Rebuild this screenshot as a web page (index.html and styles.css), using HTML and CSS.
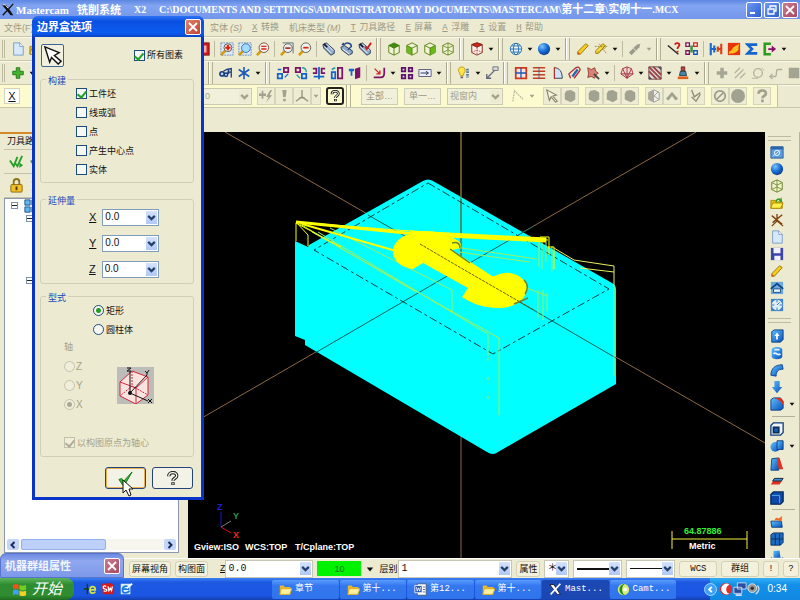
FILE: index.html
```html
<!DOCTYPE html>
<html lang="zh-CN">
<head>
<meta charset="utf-8">
<title>Mastercam 铣削系统 X2</title>
<link rel="stylesheet" href="styles.css">
</head>
<body>
<svg class="defs" aria-hidden="true">
<defs>
<linearGradient id="gBlue" x1="0" y1="0" x2="1" y2="1"><stop offset="0" stop-color="#5cc0ff"/><stop offset="1" stop-color="#0a4fb8"/></linearGradient>
<radialGradient id="gBall" cx=".35" cy=".3" r=".8"><stop offset="0" stop-color="#7cc4ff"/><stop offset=".5" stop-color="#1c6fd8"/><stop offset="1" stop-color="#06357c"/></radialGradient>
</defs>
<symbol id="chev" viewBox="0 0 10 10"><path d="M2 3.500 5 6.500 8 3.500" fill="none" stroke="currentColor" stroke-width="2"/></symbol>
<symbol id="tri" viewBox="0 0 10 10"><path d="M1 3h8L5 8z" fill="currentColor"/></symbol>
<symbol id="cross" viewBox="0 0 10 10"><path d="M1 1l8 8M9 1l-8 8" stroke="currentColor" stroke-width="1.800"/></symbol>
<symbol id="logo" viewBox="0 0 16 16"><path d="M1 2h5l8 12h-3z" fill="#111"/><path d="M14 1 2 14" stroke="#111" stroke-width="1.500"/><path d="M2 2h3l3 4" fill="none" stroke="#fff"/></symbol>
<symbol id="page" viewBox="0 0 16 16"><path d="M3 1h7l4 4v10H3z" fill="#d5e9fb" stroke="#7697c4"/><path d="M10 1v4h4" fill="#fff" stroke="#7697c4"/></symbol>
<symbol id="open" viewBox="0 0 16 16"><path d="M1 5h5l1 2h7v7H1z" fill="#e8c400" stroke="#a88600"/><path d="M3 8h12l-3 6H1z" fill="#fff04c" stroke="#a88600"/><path d="M6 6c1-4 5-4 6-3l1-2 1 6-5-1 2-1c-2-1-3 0-3 2z" fill="#3a9c28"/></symbol>
<symbol id="redx" viewBox="0 0 16 16"><rect x="1" y="1" width="14" height="14" fill="#d21a1a" stroke="#701010"/><path d="M4 4h8v8H4z" fill="#f6b0a8"/></symbol>
<symbol id="lensbase" viewBox="0 0 16 16"><path d="M1 15l5-5" stroke="#d79a10" stroke-width="3"/></symbol>
<symbol id="zoomwin" viewBox="0 0 16 16"><path d="M1 1h14v14H1z" fill="#dce8f4" stroke="#5c88c4" stroke-dasharray="2 1"/><use href="#lensbase"/><circle cx="9" cy="6.500" r="4.500" fill="#f5f2ee" stroke="#57473a"/><path d="M9 3.500v6M6 6.500h6" stroke="#e02010" stroke-width="2.400"/></symbol>
<symbol id="zoomtgt" viewBox="0 0 16 16"><path d="M1 1h14v14H1z" fill="#dce8f4" stroke="#5c88c4" stroke-dasharray="2 1"/><use href="#lensbase"/><circle cx="9" cy="7" r="5" fill="#9fdcff" stroke="#3568a8"/></symbol>
<symbol id="zoomin" viewBox="0 0 16 16"><use href="#lensbase"/><circle cx="9" cy="6.500" r="5.500" fill="#f5f2ee" stroke="#6b4a3a"/><path d="M6 5h6M6 8h6" stroke="#e02010" stroke-width="1.600"/></symbol>
<symbol id="zoomsel" viewBox="0 0 16 16"><path d="M3 1h12v12" fill="none" stroke="#55687e"/><use href="#lensbase"/><circle cx="9" cy="7" r="5" fill="#eee" stroke="#555"/><path d="M6 7h6" stroke="#a33" stroke-width="2"/></symbol>
<symbol id="zoomout" viewBox="0 0 16 16"><use href="#lensbase"/><circle cx="9" cy="6.500" r="5.500" fill="#f2f2ee" stroke="#555"/><path d="M6 6.500h6" stroke="#e02010" stroke-width="2"/></symbol>
<symbol id="pan" viewBox="0 0 16 16"><path d="M1 3l4-2 9 8v4l-4 2-8-8z" fill="#8fa9c8" stroke="#22344c"/><path d="M3 5l8 8M6 3l7 7" stroke="#fff"/><path d="M2 2l4 4" stroke="#113" stroke-width="2"/></symbol>
<symbol id="pan2" viewBox="0 0 16 16"><path d="M1 6l4-2 9 6v3l-4 2-8-6z" fill="#8fa9c8" stroke="#22344c"/><path d="M3 8l8 6" stroke="#fff"/><path d="M5 3c2-3 8-2 8 2l-4 4M5 3 3 1M5 3H2" fill="none" stroke="#1c3f90" stroke-width="1.600"/></symbol>
<symbol id="pan3" viewBox="0 0 16 16"><use href="#pan"/><path d="M8 5l2 3 5-7" fill="none" stroke="#d01818" stroke-width="2"/></symbol>
<symbol id="cubeT" viewBox="0 0 16 16"><path d="M8 1l6 3v8l-6 3-6-3V4z" fill="#f1f2d4" stroke="#4b7a08"/><path d="M8 1l6 3-6 3-6-3z" fill="#3c8c10"/><path d="M2 4l6 3 6-3M8 7v8" fill="none" stroke="#4b7a08"/></symbol>
<symbol id="cubeL" viewBox="0 0 16 16"><path d="M8 1l6 3v8l-6 3-6-3V4z" fill="#f1f2d4" stroke="#4b7a08"/><path d="M2 4l6 3v8l-6-3z" fill="#6ab81c"/><path d="M2 4l6 3 6-3M8 7v8" fill="none" stroke="#4b7a08"/></symbol>
<symbol id="cubeR" viewBox="0 0 16 16"><path d="M8 1l6 3v8l-6 3-6-3V4z" fill="#f1f2d4" stroke="#4b7a08"/><path d="M14 4 8 7v8l6-3z" fill="#6ab81c"/><path d="M2 4l6 3 6-3M8 7v8" fill="none" stroke="#4b7a08"/></symbol>
<symbol id="cubeI" viewBox="0 0 16 16"><path d="M8 1l6 3v8l-6 3-6-3V4z" fill="#f1f2d4" stroke="#5c7a18"/><path d="M2 4l6 3 6-3M8 7v8M2 12l6-3 6 3M8 1v6" fill="none" stroke="#6d8c28"/></symbol>
<symbol id="cubeRed" viewBox="0 0 16 16"><path d="M2 3l6-2 6 2v9l-6 3-6-3z" fill="#fbf0ea" stroke="#7a1c10"/><path d="M2 3l6-2 6 2-6 3z" fill="#d8241c" stroke="#7a1c10"/><path d="M8 6v9M2 12l6-3 6 3" fill="none" stroke="#b44" stroke-dasharray="2 1"/></symbol>
<symbol id="globe" viewBox="0 0 16 16"><circle cx="8" cy="8" r="6.500" fill="#e8f4fa" stroke="#1f6aa8"/><ellipse cx="8" cy="8" rx="3" ry="6.500" fill="none" stroke="#1f6aa8"/><path d="M1.500 8h13M3 4.500h10M3 11.500h10" stroke="#1f6aa8"/></symbol>
<symbol id="ball" viewBox="0 0 16 16"><circle cx="8" cy="8" r="7" fill="url(#gBall)"/></symbol>
<symbol id="eraser" viewBox="0 0 16 16"><path d="M2 11 11 2l3 2-9 10H2z" fill="#f6ce1c" stroke="#94700a"/><path d="M2 11l3 3H2z" fill="#e0502c"/></symbol>
<symbol id="erase2" viewBox="0 0 16 16"><path d="M2 10 10 2l3 2-8 9H2z" fill="#f6dc3c" stroke="#94700a"/><path d="M1 5h14M4 12l10-6M6 2l8 11" stroke="#9a8420" stroke-dasharray="2 1"/></symbol>
<symbol id="erase3" viewBox="0 0 16 16"><path d="M1 12 10 3l4-1-1 4-9 9z" fill="#9c9c8a"/><path d="M4 5l6 6" stroke="#dcdcc8"/></symbol>
<symbol id="query" viewBox="0 0 16 16"><path d="M1 4l12 10" stroke="#222" stroke-width="1.500"/><path d="M9 3c1-3 6-2 5 1-.5 1.500-2 1.500-2 4M12 10v2" fill="none" stroke="#d01818" stroke-width="2"/></symbol>
<symbol id="levels" viewBox="0 0 16 16"><path d="M1 1h4v4H1zM1 10h4v4H1z" fill="#fff" stroke="#801060" stroke-width="1.500"/><path d="M10 1h4v4h-4z" fill="#fff" stroke="#d02020" stroke-width="1.500"/><path d="M10 10h4v4h-4z" fill="#fff" stroke="#1050c0" stroke-width="1.500"/><path d="M6 4h3v8H6z" fill="#3a9848"/></symbol>
<symbol id="hsplit" viewBox="0 0 16 16"><path d="M2 1v14M2 8h6M6 4v8" stroke="#1868d0" stroke-width="2.400"/><path d="M14 2v12M9 8h5M10 5v6" stroke="#e03c14" stroke-width="2.400"/></symbol>
<symbol id="fire" viewBox="0 0 16 16"><path d="M1 1h14v14H1z" fill="#e6340c"/><path d="M2 14c0-5 3-3 4-6s6-4 8-6c-2 5 1 6-3 9s-6 1-9 3z" fill="#ffc020"/></symbol>
<symbol id="sigma" viewBox="0 0 16 16"><path d="M14 3H3l5 5-5 5h11" fill="none" stroke="#1464d0" stroke-width="3"/></symbol>
<symbol id="exitg" viewBox="0 0 16 16"><path d="M9 2H2v12h7" fill="none" stroke="#2c9c20" stroke-width="3"/><path d="M6 7h4V4l5 4-5 4V9H6z" fill="#8a1070"/></symbol>
<symbol id="plus" viewBox="0 0 16 16"><path d="M6 2h4v4h4v4h-4v4H6v-4H2V6h4z" fill="#44b42c" stroke="#1c7410"/></symbol>
<symbol id="glasses" viewBox="0 0 16 16"><circle cx="3.500" cy="9" r="2.500" fill="#b8d0ec" stroke="#123a80" stroke-width="1.800"/><circle cx="8" cy="10" r="2" fill="#b8d0ec" stroke="#123a80" stroke-width="1.500"/><path d="M5 6l4-2 5-1v10M9 7h5M11 4v5" fill="none" stroke="#1c3f80" stroke-width="1.500"/></symbol>
<symbol id="star" viewBox="0 0 16 16"><path d="M8 1v14M2 4l12 8M14 4 2 12" stroke="#1858b8" stroke-width="1.800"/></symbol>
<symbol id="xf1" viewBox="0 0 16 16"><path d="M9 2h5v5H9z" fill="none" stroke="#7a1468" stroke-width="2"/><path d="M2 9h5v5H2z" fill="none" stroke="#1464d0" stroke-width="2"/><path d="M10 13l4-4M2 4h4" stroke="#1464d0" stroke-width="1.500"/></symbol>
<symbol id="xf2" viewBox="0 0 16 16"><path d="M2 2h5v5H2z" fill="none" stroke="#7a1468" stroke-width="2"/><path d="M9 9h5v5H9z" fill="none" stroke="#1464d0" stroke-width="2"/><path d="M9 2c4 0 5 2 5 5M3 10l4 4" fill="none" stroke="#24a0a0" stroke-width="1.500"/></symbol>
<symbol id="xf3" viewBox="0 0 16 16"><path d="M1 3h4v5H1M15 3h-4v5h4" fill="none" stroke="#7a1468" stroke-width="2"/><path d="M8 1v14M2 12h12" stroke="#1464d0" stroke-width="2"/></symbol>
<symbol id="xf4" viewBox="0 0 16 16"><path d="M9 2h5v12H9z" fill="none" stroke="#7a1468" stroke-width="2"/><path d="M2 7h4v7H2z" fill="none" stroke="#1464d0" stroke-width="2"/><path d="M2 4l4-2" stroke="#24a0a0" stroke-width="2"/></symbol>
<symbol id="xf5" viewBox="0 0 16 16"><path d="M8 3l6-2v12l-6 2z" fill="#7a1468"/><path d="M1 3h6v3H5v5H3V6H1z" fill="#1464d0"/></symbol>
<symbol id="bend" viewBox="0 0 16 16"><path d="M2 13h8c3 0 4-2 4-5V2" fill="none" stroke="#7a1468" stroke-width="2"/><path d="M3 3l6 6M9 5v4H5" fill="none" stroke="#d02020" stroke-width="1.500"/></symbol>
<symbol id="four" viewBox="0 0 16 16"><path d="M2 2h4v4H2zM10 2h4v4h-4zM2 10h4v4H2zM10 10h4v4h-4z" fill="#dce" stroke="#5c1468" stroke-width="2"/></symbol>
<symbol id="flow" viewBox="0 0 16 16"><path d="M1 4h14v8H1z" fill="#eef" stroke="#557"/><path d="M3 8h8M9 6l3 2-3 2" fill="none" stroke="#124"/></symbol>
<symbol id="bulb" viewBox="0 0 16 16"><path d="M5 1a4 4 0 0 1 3 7l-1 3H4L3 8a4 4 0 0 1 2-7z" fill="#ffe448" stroke="#b89818"/><path d="M4 13h3" stroke="#666" stroke-width="2"/><path d="M12 3v10" stroke="#5878a0" stroke-width="3" stroke-dasharray="2 1"/></symbol>
<symbol id="dim" viewBox="0 0 16 16"><path d="M2 14 13 3M2 9v5h5" fill="none" stroke="#60687c" stroke-width="1.500"/><path d="M9 1h6v4H9z" fill="#ddd" stroke="#60687c"/></symbol>
<symbol id="grid4" viewBox="0 0 16 16"><path d="M2 2h12v12H2z" fill="#f6e8e0" stroke="#d83418" stroke-width="2"/><path d="M8 2v12M2 8h12" stroke="#1858b8" stroke-width="1.500"/></symbol>
<symbol id="lines" viewBox="0 0 16 16"><path d="M1 2h14M1 6h14M1 10h14M1 14h14" stroke="#c83c20" stroke-width="1.500"/><path d="M8 1v14" stroke="#4c5c88"/></symbol>
<symbol id="quad" viewBox="0 0 16 16"><path d="M5 14V2c6 0 9 5 9 12z" fill="#cfe4f8" stroke="#234"/><path d="M5 1v14" stroke="#d02020"/></symbol>
<symbol id="clip" viewBox="0 0 16 16"><path d="M3 14 1 9l8-7c3-2 6 1 4 4l-6 8" fill="none" stroke="#b02c2c" stroke-width="1.500"/><path d="M5 12l6-8" stroke="#2c60b0" stroke-width="2.500"/></symbol>
<symbol id="gear" viewBox="0 0 16 16"><path d="M2 2l4 2 4-2 1 4 3 2-3 3-1 3-4-2-4 1 1-4z" fill="#d88478" stroke="#8c3c30"/><path d="M9 9l6 6" stroke="#444" stroke-width="2"/></symbol>
<symbol id="mesh" viewBox="0 0 16 16"><path d="M3 3l5-2 5 2 2 6-7 5-7-5z" fill="#f0d8d0" stroke="#a02c38"/><path d="M3 3l5 11 5-11M1 9h14M8 1v13" fill="none" stroke="#a02c38"/></symbol>
<symbol id="hatch" viewBox="0 0 16 16"><path d="M1 1h14v14H1z" fill="#ddd" stroke="#5c3838"/><path d="M1 1l14 14M6 1l9 9M1 6l9 9" stroke="#9c4444" stroke-width="2.200"/><path d="M11 1h4v4zM1 11v4h4z" fill="#555"/></symbol>
<symbol id="tool" viewBox="0 0 16 16"><path d="M6 1h4v5H6z" fill="#b44" stroke="#622"/><path d="M5 6h6l1 5H4z" fill="#48a" stroke="#234"/><path d="M2 12h12v3H2z" fill="#e06018"/></symbol>
<symbol id="gplus" viewBox="0 0 16 16"><path d="M6 2h4v4h4v4h-4v4H6v-4H2V6h4z" fill="#a6a694"/></symbol>
<symbol id="gbolt" viewBox="0 0 16 16"><path d="M0 5h3V2h2v3h3v3H5v3H3V8H0z" fill="#a2a28e"/><path d="M13 1 8 9h3l-3 6 7-8h-3l3-6z" fill="#a2a28e"/></symbol>
<symbol id="gexc" viewBox="0 0 16 16"><path d="M6 1h5l-1 8H7zM7 11h3v3H7z" fill="#a2a28e"/></symbol>
<symbol id="gaxis" viewBox="0 0 16 16"><path d="M8 1v8L1 14M8 9l7 5M5 10h6" fill="none" stroke="#92927e" stroke-width="1.500"/></symbol>
<symbol id="glines" viewBox="0 0 16 16"><path d="M2 8l6-6M2 14 12 4M8 14l6-6" stroke="#b4b4a2" stroke-width="1.500"/></symbol>
<symbol id="gcirc" viewBox="0 0 16 16"><circle cx="8" cy="8" r="5" fill="none" stroke="#b0b09e" stroke-width="1.500"/><path d="M1 14h7M12 2l3 3" stroke="#b0b09e"/></symbol>
<symbol id="gstep" viewBox="0 0 16 16"><path d="M1 12h6c3 0 0-8 3-8h5M4 9l-3 3 3 3" fill="none" stroke="#b0b09e" stroke-width="1.500"/></symbol>
<symbol id="gbox" viewBox="0 0 16 16"><path d="M2 2h12v12H2z" fill="#a4a492"/></symbol>
<symbol id="gcursor" viewBox="0 0 16 16"><path d="M2 1l11 6-4 1 5 6-2 1-5-6-2 4z" fill="#f4f4e0" stroke="#86866f" stroke-width="1.300"/></symbol>
<symbol id="gblob" viewBox="0 0 16 16"><path d="M4 2l5-1 5 3v8l-5 3-7-3V5z" fill="#a2a290"/></symbol>
<symbol id="gpie" viewBox="0 0 16 16"><path d="M8 1l6 3v8l-6 3-6-3V4z" fill="#eee" stroke="#999986"/><path d="M8 1v14l-6-3V4z" fill="#a8a896"/><path d="M8 8l6 4M8 8l5-5" stroke="#999986"/></symbol>
<symbol id="gchev" viewBox="0 0 16 16"><path d="M1 11 8 3l7 8-3 2-4-5-4 5z" fill="#a2a290"/></symbol>
<symbol id="gpick" viewBox="0 0 16 16"><path d="M3 1l3 8 7-5M3 9l5 5 5-8" fill="none" stroke="#8c8c78" stroke-width="1.600"/></symbol>
<symbol id="gno" viewBox="0 0 16 16"><circle cx="8" cy="8" r="6" fill="none" stroke="#9c9c88" stroke-width="2"/><path d="M4 12l8-8" stroke="#9c9c88" stroke-width="2"/></symbol>
<symbol id="gball" viewBox="0 0 16 16"><circle cx="8" cy="8" r="8" fill="#a2a290"/></symbol>
<symbol id="qmark" viewBox="0 0 16 16"><path d="M4 5.500c0-5 8.500-5 8.500-.5 0 3-4 2.500-4 5.500M8.500 12v3" fill="none" stroke="currentColor" stroke-width="3.600"/><path d="M4 5.500c0-5 8.500-5 8.500-.5 0 3-4 2.500-4 5.500M8.500 12.800v1.500" fill="none" stroke="#f8f8ee" stroke-width="1.400"/></symbol>
<symbol id="gq" viewBox="0 0 16 16"><path d="M4 5.500c0-5 8.500-5 8.500-.5 0 3-4 2.500-4 5.500M8.500 12v3" fill="none" stroke="#a0a08c" stroke-width="3"/></symbol>
<symbol id="gdots" viewBox="0 0 16 16"><path d="M2 14 4 2l10 10" fill="none" stroke="#b8b8a4" stroke-width="1.500" stroke-dasharray="2 1"/></symbol>
<symbol id="lock" viewBox="0 0 16 16"><path d="M5 8V4c0-4 6-4 6 0v4" fill="none" stroke="#8c7418" stroke-width="2"/><rect x="2" y="7" width="12" height="8" rx="1" fill="#f2c02c" stroke="#8c6808"/><path d="M8 9v4" stroke="#543c00" stroke-width="2"/></symbol>
<symbol id="checks" viewBox="0 0 16 16"><path d="M1 7l4 6 4-10M6 9l3 4 5-11" fill="none" stroke="#2aa02a" stroke-width="2"/><path d="M11 9l4 3-4 3z" fill="#2aa02a"/></symbol>
<symbol id="wires" viewBox="0 0 16 16"><path d="M2 4h6M5 1v8M2 13h8M10 5l4 8" stroke="#3868b8" stroke-width="1.500"/></symbol>
<symbol id="tile" viewBox="0 0 16 16"><path d="M1 1h6v6H1zM9 1h6v6H9zM1 9h6v6H1zM9 9h6v6H9z" fill="#60b8ec" stroke="#144c88"/></symbol>
<symbol id="winblue" viewBox="0 0 16 16"><path d="M1 2h14v13H1z" fill="#5c9cdc" stroke="#285c9c"/><path d="M1 2h14v3H1z" fill="#2c64ac"/><circle cx="8" cy="9" r="3" fill="none" stroke="#fff"/><path d="M3 13l9-7" stroke="#d8ecff"/></symbol>
<symbol id="axisr" viewBox="0 0 16 16"><path d="M8 1v8L2 15M8 9l7 6M2 3l12 10M14 2 3 11" fill="none" stroke="#7c4410" stroke-width="1.500"/></symbol>
<symbol id="disk" viewBox="0 0 16 16"><path d="M1 1h14v14H1z" fill="#3c44a8"/><path d="M4 1h8v6H4zM5 10h7v5H5z" fill="#f2f2fc"/></symbol>
<symbol id="house" viewBox="0 0 16 16"><path d="M1 1h14v14H1z" fill="#6ca8e0"/><path d="M1 9 8 3l7 6" fill="none" stroke="#10427c" stroke-width="2"/><path d="M4 9h8v4H4z" fill="#e8f2fa" stroke="#10427c"/></symbol>
<symbol id="clock" viewBox="0 0 16 16"><path d="M1 1h14v14H1z" fill="#3c84cc"/><circle cx="8" cy="8" r="5.500" fill="#dceefa" stroke="#eef"/><path d="M8 2v3M8 11v3M2 8h3M11 8h3M8 8l3-3" stroke="#2868ac"/></symbol>
<symbol id="solUp" viewBox="0 0 16 16"><path d="M2 3l3-2h10v11l-3 3H2z" fill="url(#gBlue)" stroke="#0a3c80"/><path d="M7 12V8H5l3-4 3 4H9v4z" fill="#fff"/></symbol>
<symbol id="solRing" viewBox="0 0 16 16"><path d="M2 4c0-4 12-4 12 0v8c0 4-12 4-12 0z" fill="url(#gBlue)"/><path d="M5 4h6M4 9c3-3 4 3 8 0" fill="none" stroke="#e0f4ff" stroke-width="2"/></symbol>
<symbol id="solArc" viewBox="0 0 16 16"><path d="M1 14C1 6 6 2 14 2l1 5c-6 0-8 3-8 8z" fill="url(#gBlue)" stroke="#0a4088"/></symbol>
<symbol id="solDn" viewBox="0 0 16 16"><path d="M5 1h6v7h3l-6 7-6-7h3z" fill="url(#gBlue)"/></symbol>
<symbol id="solFil" viewBox="0 0 16 16"><path d="M1 3l3-2h8l3 4v8l-3 2H1z" fill="url(#gBlue)" stroke="#0a3c80"/><path d="M6 1h6l3 3v5l-3-4z" fill="#e03020"/></symbol>
<symbol id="solSh" viewBox="0 0 16 16"><path d="M1 4l3-3h11v11l-3 3H1z" fill="#eef4fa" stroke="#0e3c78" stroke-width="1.500"/><path d="M4 6h6v6H4z" fill="#1860b8" stroke="#0e2c58" stroke-width="2"/></symbol>
<symbol id="solBool" viewBox="0 0 16 16"><circle cx="6" cy="9" r="5.500" fill="url(#gBlue)"/><path d="M8 2h7v10H8z" fill="url(#gBlue)" stroke="#0a3c80"/></symbol>
<symbol id="solDraft" viewBox="0 0 16 16"><path d="M2 2l8-1v14H1z" fill="url(#gBlue)" stroke="#0a3c80"/><path d="M8 1h3l4 13h-5z" fill="#e03020"/></symbol>
<symbol id="solTrim" viewBox="0 0 16 16"><path d="M1 12l4-7h10l-4 7z" fill="#e03020"/><path d="M5 5h10l-2 3H3z" fill="#3c90e0" stroke="#123"/></symbol>
<symbol id="solBox" viewBox="0 0 16 16"><path d="M1 4l3-3h11v11l-3 3H1z" fill="#0c48a8" stroke="#062860" stroke-width="1.500"/><path d="M2 5h9v9" fill="none" stroke="#62b0f4"/></symbol>
<symbol id="solHot" viewBox="0 0 16 16"><path d="M1 7h12l1 7H2z" fill="url(#gBlue)" stroke="#0a3c80"/><path d="M5 6l2-3 3 1 4-3-1 6-4-1z" fill="#f06820"/></symbol>
<symbol id="solGrid" viewBox="0 0 16 16"><path d="M1 3l3-2h11v11l-3 3H1z" fill="#1c6cc0" stroke="#082c60"/><path d="M1 8h14M6 2v13M11 2v13" stroke="#0a2c58"/></symbol>
<symbol id="solCube" viewBox="0 0 16 16"><path d="M4 2h7l1 8H4z" fill="url(#gBlue)"/><path d="M1 10l4 4 3-2M15 10l-4 4" fill="none" stroke="#145090" stroke-width="2"/></symbol>
<symbol id="folder" viewBox="0 0 16 16"><path d="M1 3h5l1 2h7v9H1z" fill="#e8b82c"/><path d="M3 7h13l-3 7H1z" fill="#fff0a0" stroke="#d8a818"/></symbol>
<symbol id="word" viewBox="0 0 16 16"><path d="M4 1h11v14H4z" fill="#fff" stroke="#456"/><path d="M1 3h9v9H1z" fill="#2c58b4" stroke="#fff"/><path d="M3 5l1 5 1.500-4L7 10l1-5" fill="none" stroke="#fff"/><path d="M11 5h3M11 8h3M11 11h3" stroke="#456"/></symbol>
<symbol id="logow" viewBox="0 0 16 16"><path d="M1 2h5l8 12h-4z" fill="#fff" stroke="#111"/><path d="M14 1 2 14" stroke="#fff" stroke-width="2"/></symbol>
<symbol id="camt" viewBox="0 0 16 16"><circle cx="8" cy="8" r="7" fill="#d8ec70"/><path d="M10 1a7 7 0 1 0 0 14c-5-2-5-12 0-14z" fill="#208828"/><circle cx="10" cy="8" r="2.500" fill="#fff"/></symbol>
</svg>

<header class="titlebar">
  <svg class="i14"><use href="#logo"/></svg>
  <span class="app">Mastercam</span><span class="sys">铣削系统</span><span class="ver">X2</span>
  <span class="path">C:\DOCUMENTS AND SETTINGS\ADMINISTRATOR\MY DOCUMENTS\MASTERCAM\<span class="cj">第十二章</span>\<span class="cj">实例十一</span>.MCX</span>
  <div class="winbtns">
    <button class="wb" aria-label="最小化"><svg viewBox="0 0 10 10"><path d="M1 8h5" stroke="#fff" stroke-width="2"/></svg></button>
    <button class="wb" aria-label="还原"><svg viewBox="0 0 10 10"><path d="M3 3V1h6v5H7M1 4h6v5H1z" fill="none" stroke="#fff" stroke-width="1.300"/></svg></button>
    <button class="wb red" aria-label="关闭"><svg><use href="#cross"/></svg></button>
  </div>
</header>

<nav class="menubar">
  <a class="first" href="#">文件(F)</a><a href="#">实体<i>(S)</i></a><a href="#"><u>X</u> 转换</a><a href="#">机床类型<i>(M)</i></a><a href="#"><u>T</u> 刀具路径</a><a href="#"><u>E</u> 屏幕</a><a href="#"><u>A</u> 浮雕</a><a href="#"><u>I</u> 设置</a><a href="#"><u>H</u> 帮助</a>
</nav>

<div class="bar">
  <div class="lead"><b class="grip"></b><button class="tb" aria-label="新建"><svg><use href="#page"/></svg></button><button class="tb" aria-label="打开"><svg><use href="#open"/></svg></button></div>
  <button class="tb" aria-label="删除视图"><svg><use href="#redx"/></svg></button><b class="sep"></b>
  <button class="tb" aria-label="窗口放大"><svg><use href="#zoomwin"/></svg></button><button class="tb" aria-label="目标放大"><svg><use href="#zoomtgt"/></svg></button><button class="tb" aria-label="放大"><svg><use href="#zoomin"/></svg></button><b class="sep"></b>
  <button class="tb" aria-label="选取缩小"><svg><use href="#zoomsel"/></svg></button><button class="tb" aria-label="缩小"><svg><use href="#zoomout"/></svg></button><b class="sep"></b>
  <button class="tb" aria-label="平移"><svg><use href="#pan"/></svg></button><button class="tb" aria-label="旋转"><svg><use href="#pan2"/></svg></button><button class="tb" aria-label="确认视图"><svg><use href="#pan3"/></svg></button><b class="brk"></b>
  <button class="tb" aria-label="俯视"><svg><use href="#cubeT"/></svg></button><button class="tb" aria-label="前视"><svg><use href="#cubeL"/></svg></button><button class="tb" aria-label="侧视"><svg><use href="#cubeR"/></svg></button><button class="tb" aria-label="等角"><svg><use href="#cubeI"/></svg></button><b class="brk"></b>
  <button class="tb" aria-label="构图面"><svg><use href="#cubeRed"/></svg></button><button class="dd" aria-label="更多"><svg><use href="#tri"/></svg></button><b class="brk"></b>
  <button class="tb" aria-label="线框"><svg><use href="#globe"/></svg></button><button class="dd" aria-label="更多"><svg><use href="#tri"/></svg></button><button class="tb" aria-label="着色"><svg><use href="#ball"/></svg></button><button class="dd" aria-label="更多"><svg><use href="#tri"/></svg></button><b class="brk"></b>
  <button class="tb" aria-label="删除"><svg><use href="#eraser"/></svg></button><button class="tb" aria-label="删除重复"><svg><use href="#erase2"/></svg></button><button class="dd" aria-label="更多"><svg><use href="#tri"/></svg></button><b class="sep"></b><button class="tb" aria-label="恢复"><svg><use href="#erase3"/></svg></button><button class="dd off" aria-label="更多"><svg><use href="#tri"/></svg></button><b class="brk"></b>
  <button class="tb" aria-label="分析"><svg><use href="#query"/></svg></button><button class="tb" aria-label="层别管理"><svg><use href="#levels"/></svg></button><b class="sep"></b>
  <button class="tb" aria-label="拆分"><svg><use href="#hsplit"/></svg></button><button class="tb" aria-label="渲染"><svg><use href="#fire"/></svg></button><button class="tb" aria-label="求和"><svg><use href="#sigma"/></svg></button><button class="tb" aria-label="导出"><svg><use href="#exitg"/></svg></button><button class="dd" aria-label="更多"><svg><use href="#tri"/></svg></button>
</div>

<div class="bar">
  <div class="lead two"><b class="grip"></b><button class="tb" aria-label="绘点"><svg><use href="#plus"/></svg></button><button class="dd" aria-label="更多"><svg><use href="#tri"/></svg></button></div><b class="brk"></b>
  <button class="tb" aria-label="观察"><svg><use href="#glasses"/></svg></button><button class="tb" aria-label="端点"><svg><use href="#star"/></svg></button><button class="dd" aria-label="更多"><svg><use href="#tri"/></svg></button><b class="brk"></b>
  <button class="tb" aria-label="平移复制"><svg><use href="#xf1"/></svg></button><button class="tb" aria-label="旋转复制"><svg><use href="#xf2"/></svg></button><button class="tb" aria-label="镜像"><svg><use href="#xf3"/></svg></button><button class="tb" aria-label="比例"><svg><use href="#xf4"/></svg></button><button class="tb" aria-label="投影"><svg><use href="#xf5"/></svg></button><b class="sep"></b>
  <button class="tb" aria-label="补正"><svg><use href="#bend"/></svg></button><button class="dd" aria-label="更多"><svg><use href="#tri"/></svg></button><button class="tb" aria-label="阵列"><svg><use href="#four"/></svg></button><button class="tb" aria-label="拖拽"><svg><use href="#flow"/></svg></button><button class="dd" aria-label="更多"><svg><use href="#tri"/></svg></button><b class="brk"></b>
  <button class="tb" aria-label="灯光"><svg><use href="#bulb"/></svg></button><button class="dd" aria-label="更多"><svg><use href="#tri"/></svg></button><button class="tb" aria-label="标注"><svg><use href="#dim"/></svg></button><b class="brk"></b>
  <button class="tb" aria-label="网格曲面"><svg><use href="#grid4"/></svg></button><button class="tb" aria-label="直纹曲面"><svg><use href="#lines"/></svg></button><button class="tb" aria-label="旋转曲面"><svg><use href="#quad"/></svg></button><button class="tb" aria-label="扫描曲面"><svg><use href="#clip"/></svg></button><button class="tb" aria-label="曲面倒角"><svg><use href="#gear"/></svg></button><button class="dd" aria-label="更多"><svg><use href="#tri"/></svg></button><b class="sep"></b>
  <button class="tb" aria-label="曲面修剪"><svg><use href="#mesh"/></svg></button><button class="dd" aria-label="更多"><svg><use href="#tri"/></svg></button><button class="tb" aria-label="剖面线"><svg><use href="#hatch"/></svg></button><button class="dd" aria-label="更多"><svg><use href="#tri"/></svg></button><button class="tb" aria-label="刀具"><svg><use href="#tool"/></svg></button><button class="dd" aria-label="更多"><svg><use href="#tri"/></svg></button><b class="brk"></b>
  <button class="tb" aria-label="点"><svg><use href="#gplus"/></svg></button><button class="tb" aria-label="平行线"><svg><use href="#glines"/></svg></button><button class="tb" aria-label="圆"><svg><use href="#gcirc"/></svg></button><button class="tb" aria-label="倒角"><svg><use href="#gstep"/></svg></button><button class="tb" aria-label="矩形"><svg><use href="#gbox"/></svg></button>
</div>

<div class="bar ribbon">
  <div class="ribbody">
  <div class="coord">
    <button class="xbtn" aria-label="X 坐标"><u>X</u></button>
    <label class="combo off wide"><select aria-label="坐标值"><option>0</option></select><svg><use href="#chev"/></svg></label>
  </div>
  <button class="tb box" aria-label="快速点"><svg><use href="#gbolt"/></svg></button><button class="tb box" aria-label="锁定"><svg><use href="#gexc"/></svg></button><button class="tb box" aria-label="自动抓点"><svg><use href="#gaxis"/></svg></button><button class="dd off box" aria-label="更多"><svg><use href="#tri"/></svg></button>
  <button class="help" aria-label="帮助"><svg><use href="#qmark"/></svg></button><b class="brk"></b>
  <div class="picks">
    <button class="pill">全部…</button><button class="pill">单一…</button>
    <label class="combo off"><select aria-label="选取方式"><option>视窗内</option></select><svg><use href="#chev"/></svg></label>
    <span class="set"><button class="tb" aria-label="选取"><svg><use href="#gdots"/></svg></button><button class="dd off" aria-label="更多"><svg><use href="#tri"/></svg></button></span>
    <span class="set"><button class="tb box" aria-label="箭头"><svg><use href="#gcursor"/></svg></button><button class="tb box" aria-label="实体选取"><svg><use href="#gblob"/></svg></button></span>
    <span class="set"><button class="tb box" aria-label="边界"><svg><use href="#gblob"/></svg></button><button class="tb box" aria-label="面"><svg><use href="#gblob"/></svg></button><button class="tb box" aria-label="主体"><svg><use href="#gblob"/></svg></button></span>
    <span class="set"><button class="tb box" aria-label="背面"><svg><use href="#gpie"/></svg></button><button class="tb box" aria-label="上次"><svg><use href="#gchev"/></svg></button></span>
    <span class="set"><button class="tb box" aria-label="验证"><svg><use href="#gpick"/></svg></button></span>
    <span class="set"><button class="tb box" aria-label="取消"><svg><use href="#gno"/></svg></button><button class="tb box" aria-label="执行"><svg><use href="#gball"/></svg></button></span>
    <span class="set"><button class="tb box" aria-label="选取帮助"><svg><use href="#gq"/></svg></button></span>
  </div>
  </div>
</div>
<div class="spare"></div>

<main class="work">
  <aside class="ops">
    <div class="tab">刀具路径</div>
    <div class="opsbar"><svg class="i16"><use href="#checks"/></svg><svg class="i16"><use href="#checks"/></svg></div>
    <div class="opsbar"><svg class="i16"><use href="#lock"/></svg><svg class="i16"><use href="#wires"/></svg></div>
    <div class="tree">
      <div class="node"><b class="tog"></b><svg class="i14"><use href="#tile"/></svg></div>
      <div class="node kid"><b class="tog"></b></div>
      <div class="node kid far"><b class="tog"></b></div>
    </div>
    <div class="hscroll"><button class="sb" aria-label="左移"><svg class="left"><use href="#chev"/></svg></button><span class="track"><b class="thumb"></b></span><button class="sb" aria-label="右移"><svg class="right"><use href="#chev"/></svg></button></div>
  </aside>

  <section class="view">
    <svg viewBox="188 132 577 426" preserveAspectRatio="xMidYMid slice">
      <g stroke="#8c6844" fill="none"><path d="M461 132v426M225 132l540 311M696 132 188 426"/></g>
      <path d="M295 241l13 6 1-2 114-64q5-3 10 0l179 102q4 2 4 6v95l-118 68q-5 4-11 0l-182-107v-5l-10-4z" fill="#0ff"/>
      <g stroke="#106058" fill="none"><path d="M461 199v69M461 268 368 215M461 268 315 353M461 268l155 90M461 268l73-42"/></g>
      <path d="M461 132v136" stroke="#7c7430"/>
      <path d="M428 183 609 289 493 354 314 250z" fill="none" stroke="#064040" stroke-dasharray="8 3 3 3"/>
      <g fill="none" stroke="#9cf060" stroke-width="1"><path d="M312 232l187 106v77M318 232l170 102v22M330 228l122 62v22M300 224l116 68M539 240v27M542 240v29M546 238v24M552 246v25M538 290v28M543 290v30M547 293v18M455 247l82 12M459 252l70 10M527 288l20 8M614 286v90"/><path d="M488 358v55" stroke-dasharray="3 16"/></g>
      <g fill="none" stroke="#ff0"><path d="M296 222l100 8 152 10M296 223v18M296 222l12 13v11M296 223l45 24M540 237h9v18M548 247h6v22"/><path d="M296 222l130 13" stroke-width="3"/><path d="M410 233l136 7" stroke-width="5"/><path d="M302 224l94 27" stroke-width="2"/><path d="M574 260l40 6v20M580 268l34 4M554 248l20 12" stroke="#e8f060"/></g>
      <path d="M393 251c0-9 9-16 20-18 14-3 32-2 40 5 7 3 9 6 8 10l-9 2 40 26c4 1 8-4 18-3 9 1 18 9 17 15-1 7-4 13-13 17-14 6-36 3-52-8l6-9-45-25-10 6c-11-1-21-9-20-18z" fill="#ff0"/>
      <path d="M450 249l20 14M452 243q8-2 8 5M524 280q6 6 1 14M514 304l14-6" fill="none" stroke="#6c8430" stroke-width="1.500"/>
      <path d="M420 244l41 24 73 42" fill="none" stroke="#6c6000" stroke-dasharray="3 1"/>
      <path d="M221 527v-15" stroke="#1818c0"/><path d="M221 527l10-6" stroke="#777"/><path d="M221 527l10 6" stroke="#e01010"/>
      <path d="M672 531v18M747 531v18M672 539h75" stroke="#f4f040" fill="none"/>
      <g class="vt"><text x="217" y="510" fill="#2020c8">Z</text><text x="233" y="519" fill="#20a040">Y</text><text x="233" y="538" fill="#ff2018">X</text>
      <text x="194" y="550" fill="#fff">Gview:ISO</text><text x="245" y="550" fill="#fff">WCS:TOP</text><text x="295" y="550" fill="#fff">T/Cplane:TOP</text>
      <text x="684" y="534" fill="#38f038">64.87886</text><text x="689" y="549" fill="#fff">Metric</text></g>
    </svg>
  </section>

  <aside class="side">
    <b class="hgrip"></b>
    <button class="tb" aria-label="窗口"><svg><use href="#winblue"/></svg></button><button class="tb" aria-label="着色"><svg><use href="#ball"/></svg></button><button class="tb" aria-label="等角视图"><svg><use href="#cubeI"/></svg></button><button class="tb" aria-label="打开"><svg><use href="#open"/></svg></button><button class="tb" aria-label="坐标轴"><svg><use href="#axisr"/></svg></button><button class="tb" aria-label="新建"><svg><use href="#page"/></svg></button><button class="tb" aria-label="保存"><svg><use href="#disk"/></svg></button><button class="tb" aria-label="删除"><svg><use href="#eraser"/></svg></button><button class="tb" aria-label="主视图"><svg><use href="#house"/></svg></button><button class="tb" aria-label="适度化"><svg><use href="#clock"/></svg></button>
    <b class="hgrip second"></b>
    <button class="tb" aria-label="挤出"><svg><use href="#solUp"/></svg></button><button class="tb" aria-label="旋转实体"><svg><use href="#solRing"/></svg></button><button class="tb" aria-label="扫描实体"><svg><use href="#solArc"/></svg></button><button class="tb" aria-label="举升"><svg><use href="#solDn"/></svg></button><span class="pair"><button class="tb" aria-label="倒圆角"><svg><use href="#solFil"/></svg></button><button class="dd" aria-label="更多"><svg><use href="#tri"/></svg></button></span>
    <b class="hsep"></b>
    <button class="tb" aria-label="抽壳"><svg><use href="#solSh"/></svg></button><span class="pair"><button class="tb" aria-label="布尔"><svg><use href="#solBool"/></svg></button><button class="dd" aria-label="更多"><svg><use href="#tri"/></svg></button></span><button class="tb" aria-label="拔模"><svg><use href="#solDraft"/></svg></button><button class="tb" aria-label="修剪实体"><svg><use href="#solTrim"/></svg></button><button class="tb" aria-label="基本实体"><svg><use href="#solBox"/></svg></button>
    <b class="hsep"></b>
    <button class="tb" aria-label="移除面"><svg><use href="#solHot"/></svg></button><button class="tb" aria-label="实体网格"><svg><use href="#solGrid"/></svg></button><button class="tb" aria-label="实体视图"><svg><use href="#solCube"/></svg></button>
  </aside>
</main>

<div class="status">
  <button class="st">屏幕视角</button><button class="st">构图面</button>
  <label class="zl" for="zval"><u>Z</u></label>
  <span class="combo zc"><select id="zval"><option>0.0</option></select><svg><use href="#chev"/></svg></span>
  <button class="color">10</button><button class="dd" aria-label="颜色"><svg><use href="#tri"/></svg></button>
  <label class="lv" for="level">层别</label>
  <span class="combo lc"><select id="level"><option>1</option></select><svg><use href="#chev"/></svg></span>
  <button class="st">属性</button>
  <span class="combo pc"><select aria-label="点型"><option>＊</option></select><svg><use href="#chev"/></svg></span>
  <span class="combo ln thick"><select aria-label="线型"></select><svg><use href="#chev"/></svg></span>
  <span class="combo ln"><select aria-label="线宽"></select><svg><use href="#chev"/></svg></span>
  <button class="st grow">WCS</button><button class="st grow">群组</button><button class="st">!</button><button class="st">?</button>
</div>

<footer class="taskbar">
  <button class="start"><svg viewBox="0 0 16 16"><path d="M1 3q3-2 6 0v5q-3-2-6 0z" fill="#f05020"/><path d="M8 3q3 2 7 0v5q-4 2-7 0z" fill="#70d020"/><path d="M1 9q3-2 6 0v5q-3-2-6 0z" fill="#40a0f8"/><path d="M8 9q3 2 7 0v5q-4 2-7 0z" fill="#f8d020"/></svg>开始</button>
  <div class="quick">
    <svg viewBox="0 0 16 16"><path d="M5 2v12M1 8h6" stroke="#123c10" stroke-width="1.500"/><path d="M8 9h6c0-5-6-5-6 0s5 4 6 2" fill="none" stroke="#d8e040" stroke-width="2"/></svg>
    <svg viewBox="0 0 16 16"><path d="M1 2l11-1 3 3v10H2z" fill="#d01c1c"/><path d="M6 5c-5-2-4 3-1 3s2 4-2 2M8 5l1 5 1.500-3L12 10l1-5" fill="none" stroke="#fff" stroke-width="1.400"/></svg>
    <svg viewBox="0 0 16 16"><path d="M2 2h11v12H2z" fill="#d8f0ff"/><path d="M5 8h6c0-5-7-4-7 1s6 4 8 1" fill="none" stroke="#2078d8" stroke-width="2"/><path d="M9 7l6-5" stroke="#fff" stroke-width="2"/></svg>
  </div>
  <div class="tasks">
    <button><svg><use href="#folder"/></svg>章节</button><button><svg><use href="#folder"/></svg>第十...</button><button><svg><use href="#word"/></svg>第12...</button><button><svg><use href="#folder"/></svg>第十...</button><button class="on"><svg><use href="#logow"/></svg>Mast...</button><button><svg><use href="#camt"/></svg>Camt...</button>
  </div>
  <div class="tray">
    <button class="expand" aria-label="展开"><svg><use href="#chev"/></svg></button>
    <svg class="i14" viewBox="0 0 16 16"><circle cx="8" cy="8" r="7" fill="#e02c2c"/><path d="M12 3a6 6 0 1 0 0 10c-5 0-5-9 0-10z" fill="#fff"/></svg>
    <svg class="i14" viewBox="0 0 16 16"><path d="M5 1h10v7H5zM1 6h9v7H1z" fill="#2c4ca0" stroke="#d4e0f8"/><path d="M3 15h7" stroke="#d4e0f8" stroke-width="2"/></svg>
    <svg class="i14" viewBox="0 0 16 16"><circle cx="6" cy="7" r="5" fill="#999" stroke="#eee"/><circle cx="6" cy="7" r="2" fill="#333"/><path d="M12 4q4 5-2 10" fill="none" stroke="#cde" stroke-width="1.500"/></svg>
    <time>0:34</time>
  </div>
</footer>

<section class="mini"><span>机器群组属性</span><button class="wb red" aria-label="关闭"><svg><use href="#cross"/></svg></button></section>

<form class="dialog">
  <header><h1>边界盒选项</h1><button type="button" class="wb red" aria-label="关闭"><svg><use href="#cross"/></svg></button></header>
  <div class="dbody">
    <div class="top">
      <button type="button" class="pick" aria-label="选取图素"><svg viewBox="0 0 20 20"><path d="M2 1l15 6-5 3 7 6-3 3-7-7-2 5z" fill="#fff" stroke="#111" stroke-width="1.500"/></svg></button>
      <label><input type="checkbox" checked>所有图素</label>
    </div>
    <fieldset class="f1"><legend>构建</legend>
      <label><input type="checkbox" checked>工件坯</label><label><input type="checkbox">线或弧</label><label><input type="checkbox">点</label><label><input type="checkbox">产生中心点</label><label><input type="checkbox">实体</label>
    </fieldset>
    <fieldset class="f2"><legend>延伸量</legend>
      <div class="ext"><label for="ex"><u>X</u></label><span class="combo"><select id="ex"><option>0.0</option></select><svg><use href="#chev"/></svg></span></div>
      <div class="ext"><label for="ey"><u>Y</u></label><span class="combo"><select id="ey"><option>0.0</option></select><svg><use href="#chev"/></svg></span></div>
      <div class="ext"><label for="ez"><u>Z</u></label><span class="combo"><select id="ez"><option>0.0</option></select><svg><use href="#chev"/></svg></span></div>
    </fieldset>
    <fieldset class="f3"><legend>型式</legend>
      <div class="shape"><label><input type="radio" name="shape" checked>矩形</label><label><input type="radio" name="shape">圆柱体</label></div>
      <div class="axis">
        <div class="axcol"><span>轴</span><label><input type="radio" name="ax" disabled>Z</label><label><input type="radio" name="ax" disabled>Y</label><label><input type="radio" name="ax" checked disabled>X</label></div>
        <svg class="cube" viewBox="0 0 37 37"><path d="M0 0h37v37H0z" fill="#bcbcb8"/><path d="M3 15 15 4l16 6v18L19 37 3 29z" fill="#fbe4e0" stroke="#d02838"/><path d="M3 15l16 6 12-11M19 21v16" fill="none" stroke="#d02838"/><path d="M15 4v15L3 29M15 19l16 9" fill="none" stroke="#d02838" stroke-dasharray="2 1"/><path d="M13 26V4M13 26 30 8M13 26l18 8" stroke="#111"/><circle cx="13" cy="26" r="2" fill="#111"/><path d="M10 1h4l-4 3h4M28 4l2 2 2-3M30 6v2M31 32l4 4M35 32l-4 4" fill="none" stroke="#111"/></svg>
      </div>
      <label class="org"><input type="checkbox" checked disabled>以构图原点为轴心</label>
    </fieldset>
    <div class="acts">
      <button type="button" class="act ok" aria-label="确定"><svg viewBox="0 0 16 16"><path d="M1 9l3-1 2 3 9-10-8 14H5z" fill="#30c030" stroke="#1c6c14"/></svg></button>
      <button type="button" class="act" aria-label="帮助"><svg><use href="#qmark"/></svg></button>
    </div>
  </div>
</form>
<svg class="cursor" viewBox="0 0 12 18"><path d="M1 1v13l3-3 3 6 2-1-2-6h4z" fill="#fff" stroke="#111"/></svg>
</body>
</html>
```
FILE: styles.css
```css
:root {
  --face: #ecead0;
  --line: #b9b69c;
  --blue: #0a34c8;
  --cjk: "Liberation Sans", "Noto Sans CJK SC", sans-serif;
  --serif: "Liberation Serif", "Noto Sans CJK SC", serif;
  --mono: "Liberation Mono", "Noto Sans CJK SC", monospace;
}
* { box-sizing: border-box; }
body {
  margin: 0;
  height: 100vh;
  display: flex;
  flex-direction: column;
  position: relative;
  overflow: hidden;
  background: var(--face);
  color: #111;
  font: 9px/12px var(--cjk);
}
button, select, input { font: inherit; color: inherit; margin: 0; padding: 0; border: 0; background: none; }
button { display: flex; align-items: center; justify-content: center; }
svg { display: block; flex: none; }
.defs { position: absolute; width: 0; height: 0; }
.i14 { width: 14px; height: 14px; }
.i16 { width: 15px; height: 15px; }

/* Title bar */
.titlebar {
  height: 19px;
  flex: none;
  display: flex;
  align-items: center;
  padding: 0 2px 0 1px;
  background: linear-gradient(#5d87e2, #82a4f2 30%, #7396ea);
  color: #fff;
  font: bold 10px/16px var(--serif);
  white-space: pre;
}
.titlebar .cj, .sys { font-size: 11px; }
.app { width: 62px; padding-left: 1px; font-size: 11px; }
.sys { width: 57px; }
.ver { width: 25px; }
.winbtns { display: flex; gap: 2px; margin-left: auto; }
.wb { width: 16px; height: 16px; border: 1px solid #fff; border-radius: 2px; background: linear-gradient(135deg, #6f9af4, #2c5cd0); color: #fff; }
.wb svg { width: 10px; height: 10px; }
.wb.red { background: linear-gradient(135deg, #e28068, #c04434); }
.titlebar .red, .mini .red { background: linear-gradient(135deg, #cc7c90, #a84860); }

/* Menus */
.menubar { height: 17px; flex: none; display: flex; align-items: center; gap: 10px; padding-left: 4px; }
.menubar a { color: #9d9b86; text-decoration: none; white-space: nowrap; }
.menubar i { font-style: italic; margin-left: 2px; }
.menubar u { font-family: var(--mono); margin-right: 1px; }
.menubar .first { width: 196px; }

/* Toolbars */
.bar { height: 24px; display: flex; align-items: center; flex: none; border-top: 1px solid #c9c6ae; box-shadow: inset 0 1px #fbfaea; overflow: hidden; }
.lead { width: 194px; flex: none; display: flex; align-items: center; }
.two { width: 206px; }
.grip { width: 3px; height: 18px; margin: 0 4px 0 2px; border: solid #bdbaa2; border-width: 0 1px; }
.tb { width: 18px; height: 18px; flex: none; }
.tb svg { width: 14px; height: 14px; }
.dd { width: 10px; height: 18px; flex: none; }
.dd svg { width: 6px; height: 6px; }
.off { color: #a3a18c; }
.sep { width: 6px; height: 16px; flex: none; background: linear-gradient(90deg, transparent 2px, #bdbaa2 2px, #bdbaa2 3px, transparent 3px); }
.brk { width: 11px; height: 22px; flex: none; background: linear-gradient(90deg, transparent 2px, #a9a68e 2px, #a9a68e 3px, #fff 3px, #fff 4px, transparent 4px, transparent 6px, #b5b299 6px, #b5b299 7px, transparent 7px); }
.ribbon { border-bottom: 1px solid #c9c6ae; }
.ribbody { display: flex; align-items: center; height: 22px; padding-right: 6px; background: #fbfbcf; border-right: 1px solid #c2bfa7; }
.coord { width: 257px; flex: none; display: flex; align-items: center; gap: 12px; padding-left: 4px; }
.xbtn { width: 16px; height: 16px; background: #fff; border: 1px solid #d4d2ba; font-size: 11px; }
.combo { display: grid; grid-template-columns: minmax(0, 1fr) auto; align-items: center; height: 17px; border: 1px solid #7f9db9; background: #fff; }
.combo select { grid-area: 1 / 1 / 2 / 3; appearance: none; width: 100%; height: 100%; padding-left: 2px; }
.combo svg { grid-area: 1 / 2; width: 11px; height: 13px; margin-right: 1px; background: linear-gradient(#d6e2fc, #b0c8f6); color: #24406c; pointer-events: none; }
.combo.off { background: #f1f0da; border-color: #ccc9b2; color: #a3a18c; width: 56px; }
.combo.off svg { background: #eceacf; color: #a3a18c; }
.combo.off.wide { width: 220px; }
.wide select { padding-left: 172px; }
.box { background: #eeecd2; border: 1px solid #d6d4ba; }
.help { width: 18px; height: 18px; flex: none; margin-left: 5px; border: 2px solid #222; border-radius: 3px; color: #111; }
.help svg { width: 12px; height: 12px; }
.picks { display: flex; align-items: center; gap: 6px; padding-left: 6px; }
.pill { width: 37px; height: 17px; flex: none; border: 1px solid #cfcdb5; background: #f1f0da; color: #9a9884; }
.set { display: flex; }
.spare { flex: none; height: 24px; }

/* Work area */
.work { flex: 1; min-height: 0; display: grid; grid-template-columns: 188px minmax(0, 1fr) 35px; }
.ops { display: flex; flex-direction: column; padding: 0 9px 5px 4px; border-top: 2px solid #d58a2a; min-height: 0; }
.tab { height: 16px; padding: 0 3px; line-height: 14px; border-bottom: 1px solid #c6c3ab; }
.opsbar { height: 24px; display: flex; align-items: center; gap: 6px; padding-left: 5px; border-bottom: 1px solid #c6c3ab; }
.tree { flex: 1; min-height: 0; background: #fff; border: 1px solid #8a98b4; border-bottom: 0; padding: 0 6px; }
.node { display: flex; align-items: center; gap: 6px; height: 13px; }
.kid { padding-left: 15px; }
.far { margin-top: 49px; }
.tog { width: 7px; height: 7px; border: 1px solid #8292a8; background: linear-gradient(#fff 2px, #222 2px, #222 3px, #fff 3px); }
.hscroll { display: flex; height: 16px; padding: 2px; background: #fff; border: 1px solid #8a98b4; border-top: 0; }
.sb { width: 12px; background: #c4d5fa; color: #1c2c5c; border-radius: 2px; }
.sb svg { width: 10px; height: 10px; }
.left { transform: rotate(90deg); }
.right { transform: rotate(-90deg); }
.track { flex: 1; display: flex; padding: 0 2px; background: #f6f5ee; }
.thumb { width: 60%; background: #bdd0fa; border: 1px solid #94b0ec; border-radius: 2px; }
.view { background: #000; min-width: 0; min-height: 0; }
.view svg { width: 100%; height: 100%; }
.vt { font: bold 9px "Liberation Sans", sans-serif; }
.side { display: flex; flex-direction: column; padding: 3px 0 0 3px; border-right: 1px solid #b7b499; overflow: hidden; }
.side .tb { height: 17px; }
.pair { display: flex; }
.pair .dd { margin-left: 1px; }
.hgrip { height: 5px; flex: none; margin: 1px 8px 2px 0; border: solid #bdbaa2; border-width: 1px 0; }
.hgrip.second { margin-top: 5px; margin-bottom: 4px; }
.hsep { height: 1px; flex: none; margin: 3px 4px; background: #b3b098; }

/* Status bar */
.status { height: 20px; flex: none; display: flex; align-items: center; gap: 4px; padding: 0 1px 0 129px; border-top: 1px solid #fff; }
.status .st { height: 16px; padding: 0 2px; background: #f3f1dc; border: 1px solid #d4d1b9; border-radius: 3px; white-space: nowrap; }
.status .grow { flex: 1; font-family: var(--mono); }
.status .st:nth-last-child(-n+2) { width: 16px; font-family: var(--mono); }
.zl { margin-left: 8px; font-family: var(--mono); }
.status .combo { height: 18px; border-color: #c8c6b4; font-family: var(--mono); font-size: 10px; }
.zc { width: 88px; margin-left: -4px; }
.lc { width: 114px; margin-left: -3px; }
.pc { width: 25px; }
.ln { width: 49px; }
.ln select { background: linear-gradient(#111, #111) 3px center / 32px 1px no-repeat; }
.ln.thick select { background-size: 32px 2px; }
.color { width: 44px; height: 15px; background: #00f200; color: #087808; }
.status .dd svg { width: 8px; height: 8px; }

/* Taskbar */
.taskbar { height: 22px; flex: none; display: flex; background: linear-gradient(#3c80f4, #1c58e0 20%, #1a56e2 80%, #1440b0); color: #fff; }
.start { width: 74px; gap: 5px; background: linear-gradient(#5cb45c, #2f8c30 30%, #2f8c30 80%, #1f6a20); border-radius: 0 8px 8px 0; font: italic 15px/20px var(--cjk); }
.start svg { width: 15px; height: 15px; }
.quick { width: 198px; display: flex; align-items: center; gap: 4px; padding-left: 9px; }
.quick svg { width: 14px; height: 14px; }
.tasks { display: flex; gap: 1px; align-items: center; flex: 0 1 404px; min-width: 0; }
.tasks button { flex: 1 1 0; height: 19px; justify-content: flex-start; gap: 3px; padding-left: 7px; border-radius: 2px; background: linear-gradient(#5c9cfc, #3478f0 30%, #3074ec); font: 9px/14px var(--mono); }
.tasks svg { width: 13px; height: 13px; }
.tasks .on { background: #1c48b4; }
.tray { margin-left: auto; display: flex; align-items: center; padding: 0 13px 0 0; background: linear-gradient(#34b0f8, #1490e8 30%, #1088e0); }
.tray time { margin-left: 7px; font-size: 10px; }
.expand { width: 13px; height: 13px; margin: 0 2px 0 -6px; border-radius: 50%; background: #3ca0f8; border: 1px solid #a8d4ff; }
.expand svg { width: 9px; height: 9px; transform: rotate(90deg); }

/* Floating property caption */
.mini { position: absolute; left: 0; bottom: 22px; width: 124px; height: 25px; display: flex; align-items: center; justify-content: space-between; padding: 0 3px 0 4px; border-radius: 6px 6px 0 0; border: 1px solid #5874cc; background: linear-gradient(#6c88e0, #90a8f0 30%, #7c98e8); color: #f2f5ff; font: bold 11px/16px var(--cjk); }

/* Bounding box dialog */
.dialog { position: absolute; left: 32px; top: 16px; width: 172px; background: var(--face); border: 3px solid var(--blue); border-top: 0; border-radius: 7px 7px 0 0; }
.dialog header { height: 21px; margin: 0 -3px; padding: 0 3px 0 5px; display: flex; align-items: center; justify-content: space-between; border-radius: 6px 6px 0 0; background: linear-gradient(#2e74f4, #0a50e0 25%, #0b5cf0 80%, #0844c4); }
.dialog h1 { margin: 0; color: #fff; font: bold 11px/16px var(--cjk); }
.dbody { padding: 6px 7px 8px 5px; }
.dialog label { display: flex; align-items: center; gap: 2px; height: 19px; }
.dialog input { appearance: none; width: 11px; height: 11px; flex: none; border: 1px solid #1c4c7c; background: #f6f8f4; }
.dialog input[type=checkbox]:checked::before { content: ""; display: block; width: 4px; height: 7px; margin: 0 auto; border: solid #22a022; border-width: 0 2px 2px 0; transform: rotate(40deg); }
.dialog input[type=radio] { border-radius: 50%; }
.dialog input[type=radio]:checked { background: radial-gradient(#22a022 2px, #f6f8f4 3px); }
.dialog input:disabled { border-color: #c3c1aa; background: #f0eeda; }
.dialog input[type=radio]:disabled:checked { background: radial-gradient(#aaa894 2px, #f0eeda 3px); }
.dialog input[type=checkbox]:disabled:checked::before { border-color: #b0ae98; }
.top { display: flex; justify-content: space-between; align-items: center; height: 24px; padding: 0 11px 0 1px; }
.pick { width: 23px; height: 23px; border: 1px solid #3c6494; border-radius: 2px; background: #f2f1e0; }
.pick svg { width: 19px; height: 19px; }
fieldset { margin: 0; padding: 0; border: 1px solid #d2cfb6; border-radius: 3px; min-width: 0; }
legend { margin-left: 5px; padding: 0 2px; color: #1448b8; height: 9px; }
.f1 { margin-top: 8px; height: 108px; padding-left: 35px; }
.f1 legend { margin-left: -30px; }
.f2 { margin-top: 12px; height: 89px; }
.ext { display: flex; align-items: center; gap: 6px; height: 26px; padding-left: 48px; }
.ext label { font-size: 11px; }
.ext .combo { width: 57px; height: 17px; font-size: 10px; }
.f3 { margin-top: 8px; height: 165px; }
.shape { padding-left: 52px; }
.axis { display: flex; align-items: center; gap: 34px; padding-left: 23px; color: #a4a28c; }
.axis label { gap: 1px; font-size: 10px; }
.axis span { display: block; height: 18px; line-height: 16px; }
.cube { width: 37px; height: 37px; margin-top: 18px; }
.dialog .org { margin: 19px 0 0 23px; color: #a4a28c; }
.acts { display: flex; justify-content: flex-end; gap: 6px; margin-top: 10px; padding-right: 1px; }
.act { width: 41px; height: 22px; border: 1px solid #24447c; border-radius: 3px; background: #f3f2e6; color: #222; }
.act.ok { box-shadow: inset 0 0 0 1px #e8b050; }
.act svg { width: 15px; height: 15px; }
.cursor { position: absolute; left: 122px; top: 479px; width: 12px; height: 18px; }
```
